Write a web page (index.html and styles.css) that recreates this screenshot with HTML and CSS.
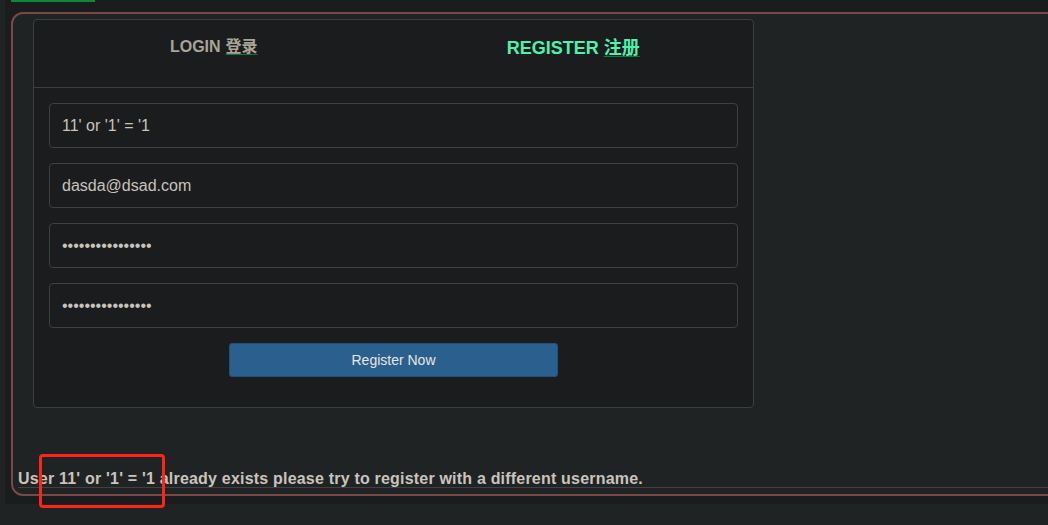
FILE: index.html
```html
<!DOCTYPE html>
<html lang="en">
<head>
<meta charset="utf-8">
<title>Register</title>
<link rel="stylesheet" href="styles.css">
</head>
<body>
<div class="topline"></div>
<div class="wrap">
  <div class="panel">
    <div class="card">
      <div class="tabs">
        <div class="tab tab-login">LOGIN <a href="#">登录</a></div>
        <div class="tab tab-register">REGISTER <a href="#">注册</a></div>
      </div>
      <form class="form">
        <input class="field" type="text" value="11' or '1' = '1">
        <input class="field" type="text" value="dasda@dsad.com">
        <input class="field" type="password" value="aaaaaaaaaaaaaaaa">
        <input class="field" type="password" value="aaaaaaaaaaaaaaaa">
        <button class="btn" type="button">Register Now</button>
      </form>
    </div>
    <div class="message">User 11' or '1' = '1 already exists please try to register with a different username.</div>
  </div>
</div>
<div class="annot"></div>
</body>
</html>
```

FILE: styles.css
```css
html, body {
  margin: 0;
  padding: 0;
}
body {
  background: #202324;
  font-family: "Liberation Sans", Arial, "Noto Sans CJK SC", sans-serif;
  overflow: hidden;
  position: relative;
  height: 525px;
}
.topline {
  position: absolute;
  left: 11px;
  top: 0;
  width: 84px;
  height: 2px;
  background: #0b8a3c;
  z-index: 2;
}
.wrap {
  margin-left: 5px;
  width: 1100px;
  background: #1b1c1e;
  padding: 12px 0 8px 6px;
}
.panel {
  border: 2px solid #7a4846;
  border-radius: 12px;
  background: #202324;
  padding: 5px 0 6px 0;
}
.card {
  margin-left: 20px;
  width: 719px;
  border: 1px solid #3b3f42;
  border-radius: 4px;
  background: #1b1c1e;
}
.tabs {
  display: flex;
  height: 67px;
  border-bottom: 1px solid #3b3f42;
}
.tab {
  flex: 1;
  display: flex;
  align-items: center;
  justify-content: center;
  font-weight: bold;
  padding-bottom: 14px;
  line-height: 20px;
}
.tab a {
  text-decoration: underline;
  text-decoration-color: #0b7a3a;
  text-underline-offset: 2px;
  color: inherit;
  font-family: "Noto Sans CJK SC", sans-serif;
  margin-left: 5px;
  line-height: 1;
  position: relative;
  top: -2px;
}
.tab-login {
  font-size: 16px;
  color: #aaa499;
}
.tab-register {
  font-size: 18px;
  color: #4ef2aa;
  padding-bottom: 12px;
}
.form {
  display: flex;
  flex-direction: column;
  align-items: center;
  gap: 15px;
  padding: 15px 15px 30px;
  margin: 0;
}
.field {
  box-sizing: border-box;
  width: 100%;
  height: 45px;
  margin: 0;
  background: #1b1c1e;
  border: 1px solid #3d4144;
  border-radius: 4px;
  padding: 0 12px;
  font-family: "Liberation Sans", Arial, sans-serif;
  font-size: 16px;
  color: #c8c3bb;
  outline: none;
}
.btn {
  box-sizing: border-box;
  width: 329px;
  height: 34px;
  background: #2a5f8e;
  border: 1px solid #23507a;
  border-radius: 3px;
  color: #e8e6e3;
  font-family: "Liberation Sans", Arial, sans-serif;
  font-size: 14px;
}
.message {
  margin: 62px 0 0 5px;
  padding-bottom: 0;
  border-bottom: 1px solid #3e4245;
  font-size: 16px;
  font-weight: bold;
  letter-spacing: 0.2px;
  line-height: 17px;
  color: #c9c4bc;
}
.annot {
  position: absolute;
  left: 39px;
  top: 454px;
  width: 120px;
  height: 48px;
  border: 3px solid #ff2418;
  border-radius: 4px;
}
```
